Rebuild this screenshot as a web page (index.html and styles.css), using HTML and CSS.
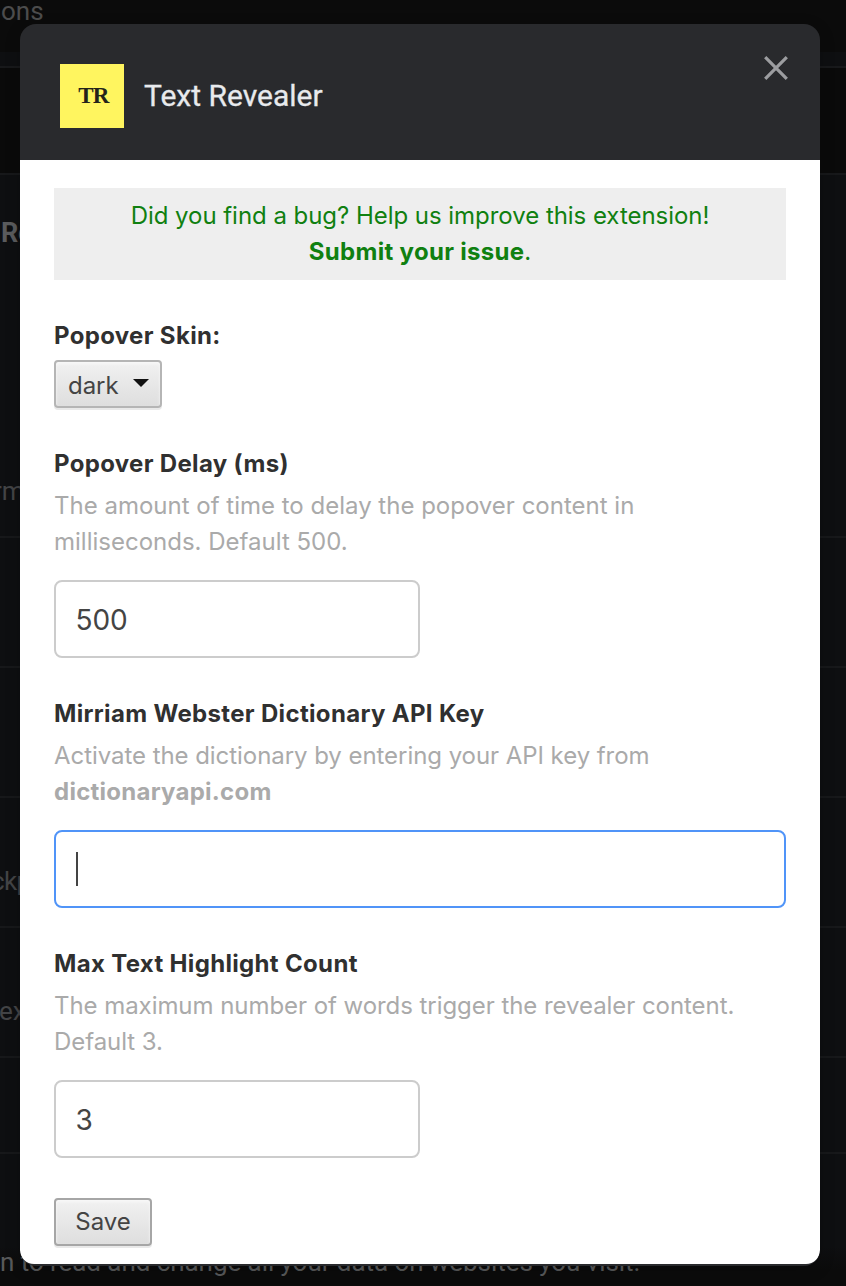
FILE: index.html
```html
<!DOCTYPE html>
<html lang="en">
<head>
<meta charset="utf-8">
<title>Text Revealer</title>
<link rel="stylesheet" href="styles.css">
</head>
<body>
<div class="page">
  <div class="row row-top"><span class="top-text">ons</span></div>
  <div class="row row-nav"></div>
  <div class="row row-details"><b class="row-title">Re</b><span class="row-text shift-r">rm</span></div>
  <div class="row"></div>
  <div class="row"></div>
  <div class="row row-label"><span class="row-text shift-c">ckp</span></div>
  <div class="row row-label"><span class="row-text shift-e">ex</span></div>
  <div class="row row-short"></div>
  <div class="row row-last"><span class="permission">n to read and change all your data on websites you visit.</span></div>
</div>
<section class="dialog">
  <header class="dialog-header">
    <div class="logo">TR</div>
    <h1 class="title">Text Revealer</h1>
    <svg class="close" viewBox="0 0 24 24"><path d="M1.2 1.2 22.8 22.8M22.8 1.2 1.2 22.8"/></svg>
  </header>
  <div class="dialog-body">
    <div class="notice"><span class="notice-line">Did you find a bug? Help us improve this extension!</span><br><b class="submit">Submit your issue</b>.</div>
    <div class="group group-skin">
      <div class="label">Popover Skin:</div>
      <div class="select"><span>dark</span><svg class="arrow" viewBox="0 0 16 8"><path d="M0 0H16L8 8Z"/></svg></div>
    </div>
    <div class="group">
      <div class="label">Popover Delay (ms)</div>
      <p class="help help-delay">The amount of time to delay the popover content in<br>milliseconds. Default 500.</p>
      <div class="field">500</div>
    </div>
    <div class="group">
      <div class="label">Mirriam Webster Dictionary API Key</div>
      <p class="help">Activate the dictionary by entering your API key from<br><b class="api">dictionaryapi.com</b></p>
      <div class="field field-focus"><span class="caret"></span></div>
    </div>
    <div class="group">
      <div class="label">Max Text Highlight Count</div>
      <p class="help">The maximum number of words trigger the revealer content.<br>Default 3.</p>
      <div class="field">3</div>
    </div>
    <div class="save">Save</div>
  </div>
</section>
</body>
</html>
```
FILE: styles.css
```css
* { box-sizing: border-box; }
body { margin: 0; width: 846px; height: 1286px; overflow: hidden; position: relative; background: #0e0f11; font-family: Inter, "Liberation Sans", sans-serif; }
.page { height: 1286px; overflow: hidden; font-family: Roboto, sans-serif; color: #434446; font-size: 26px; line-height: 32px; }
.row { height: 130px; border-bottom: 2px solid #17181a; white-space: nowrap; }
.row-top { height: 68px; padding-top: 1px; background: linear-gradient(#0b0b0b 52px, #0e0f11 52px); border-color: #18191b; }
.top-text { display: block; padding-left: 1px; margin-top: -6px; font-size: 26px; color: #4c4c4c; }
.row-nav { height: 107px; background: #0a0a0a; }
.row-details { height: 363px; padding-top: 42px; }
.row-title { display: block; margin-left: 1px; font-size: 27px; letter-spacing: -0.3px; color: #5a5b5d; margin-bottom: 226px; }
.row-text { display: block; }
.row-label { padding-top: 67px; }
.shift-r { margin-left: -7px; }
.shift-c { margin-left: -9px; letter-spacing: -0.6px; }
.shift-e { margin-left: -1px; }
.row-short { height: 96px; }
.row-last { height: 132px; border: 0; padding-top: 92px; background: linear-gradient(#0e0f11 92px, #0b0b0b 116px); }
.permission { font-size: 26px; letter-spacing: -0.06px; color: #58595a; }
.dialog { position: absolute; left: 20px; top: 24px; width: 800px; height: 1242px; padding-bottom: 2px; border-radius: 16px; background: #292a2d; overflow: hidden; box-shadow: 0 4px 16px rgba(0, 0, 0, 0.2); }
.dialog-header { height: 136px; padding: 0 32px 0 40px; display: flex; align-items: center; }
.logo { width: 64px; height: 64px; margin-top: 8px; background: #fff55f; color: #24231a; font: 600 23px/63px "Liberation Serif", serif; letter-spacing: -0.8px; text-align: center; padding-left: 3px; }
.title { margin: 8px auto 0 20px; font: 400 30px/40px Roboto, sans-serif; color: #e8eaed; white-space: nowrap; -webkit-text-stroke: 0.3px #e8eaed; }
.close { width: 24px; height: 24px; margin-bottom: 48px; stroke: #9c9da0; stroke-width: 3.2; fill: none; }
.dialog-body { height: 1104px; background: #fff; border-radius: 0 0 14px 14px; padding: 28px 34px 0; font-size: 24px; line-height: 36px; letter-spacing: -0.04px; color: #303030; }
.notice { height: 92px; padding-top: 10px; background: #eee; color: #108010; text-align: center; white-space: nowrap; margin-bottom: 38px; }
.submit { letter-spacing: 0.3px; }
.api { letter-spacing: 0.25px; }
.group { height: 250px; }
.group-skin { height: 128px; }
.label { font-weight: 700; letter-spacing: 0.33px; white-space: nowrap; }
.select { display: flex; align-items: center; width: 108px; height: 48px; margin-top: 6px; padding: 3px 11px 0 12px; justify-content: space-between; border: 2px solid #b5b5b5; border-radius: 4px; background: linear-gradient(#f1f1f1, #dedede); box-shadow: 0 2px 0 #e9e9e9, inset 0 2px 3px #f8f8f8; color: #444; }
.arrow { width: 16px; height: 8px; margin-bottom: 6px; fill: #111; }
.help { margin: 6px 0 20px; color: #aaa; letter-spacing: -0.055px; white-space: nowrap; }
.help-delay { letter-spacing: 0; }
.field { display: flex; align-items: center; width: 366px; height: 78px; padding: 2px 20px 0 19.5px; border: 2px solid #ccc; border-radius: 8px; font-size: 28px; color: #444; }
.field-focus { width: 732px; padding: 0 20px; border-color: #5094f8; }
.caret { width: 2px; height: 34px; background: #444; }
.save { width: 98px; height: 48px; margin-top: 2px; border: 2px solid #a6a6a6; border-radius: 4px; text-align: center; line-height: 43px; background: linear-gradient(#f1f1f1, #dedede); box-shadow: 0 2px 0 #e9e9e9, inset 0 2px 3px #f8f8f8; color: #444; }
```
